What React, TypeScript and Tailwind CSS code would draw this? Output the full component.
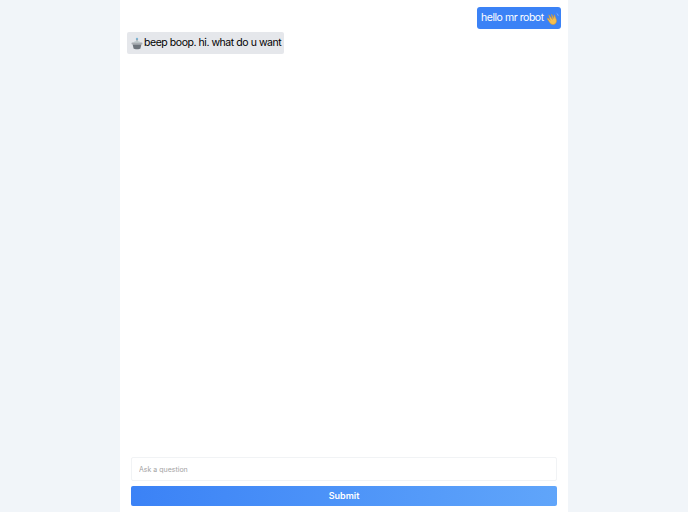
import React from 'react'

function WaveIcon() {
  return (
    <svg width="13" height="13" viewBox="0 0 14 14" className="ml-[2px] shrink-0">
      <path d="M3 3 L7 8 L6 2.5 L8.5 7 L9 3 L11 8 C12 11 10 13.5 7.5 13.5 C5.5 13.5 4.5 12 3.5 10.5 L1.5 7.5 C1.3 6.8 2 6.4 2.6 7 L4.5 9 Z" fill="#f5bf4f" stroke="#d9992e" strokeWidth="0.6" strokeLinejoin="round" />
      <path d="M11.5 1.5 C12.5 2 13 3 13.2 4" fill="none" stroke="#9cc3f5" strokeWidth="0.8" />
    </svg>
  )
}

function RobotIcon() {
  return (
    <svg width="12" height="13" viewBox="0 0 13 14" className="mr-[1px] shrink-0">
      <circle cx="6.5" cy="2" r="1.3" fill="#7bb6d6" />
      <rect x="6" y="2.5" width="1" height="2.5" fill="#8a8f96" />
      <path d="M2.5 6 C3.5 4 9.5 4 10.5 6 Z" fill="#b9c9c9" />
      <rect x="0.5" y="6" width="12" height="2" rx="1" fill="#a9adb2" />
      <path d="M1.8 8 H11.2 L10.2 12.5 C9.8 13.5 3.2 13.5 2.8 12.5 Z" fill="#6f757c" />
    </svg>
  )
}

export default function App() {
  return (
    <div className="h-screen flex justify-center bg-[#f1f5f9] font-['Inter',sans-serif]">
      <main className="w-[448px] h-full bg-white flex flex-col">
        <div className="flex-1 min-h-0 flex flex-col px-[7px] pt-[7px] gap-[3px]">
          <div className="self-end h-[22px] w-[84px] flex items-center rounded-[3px] bg-[#3b82f6] text-white text-[10.5px] leading-[14px] tracking-[-0.45px] pl-[4px] whitespace-nowrap">
            hello mr robot
            <WaveIcon />
          </div>
          <div className="self-start h-[22px] w-[157px] flex items-center rounded-[2px] bg-[#e5e7eb] text-black text-[10.5px] leading-[14px] tracking-[-0.45px] pl-[4px] whitespace-nowrap">
            <RobotIcon />
            beep boop. hi. what do u want
          </div>
        </div>
        <form className="flex flex-col gap-[5px] px-[11px] pb-[6px]">
          <input
            placeholder="Ask a question"
            className="h-[24px] w-full border border-[#f1f3f5] rounded-[2px] bg-white px-[7px] text-[7px] placeholder:text-[#a3a3a3] outline-none"
          />
          <button
            type="button"
            className="h-[20px] w-full rounded-[2px] bg-gradient-to-r from-[#3b82f6] to-[#60a5fa] text-white text-[9px] font-semibold"
          >
            Submit
          </button>
        </form>
      </main>
    </div>
  )
}
